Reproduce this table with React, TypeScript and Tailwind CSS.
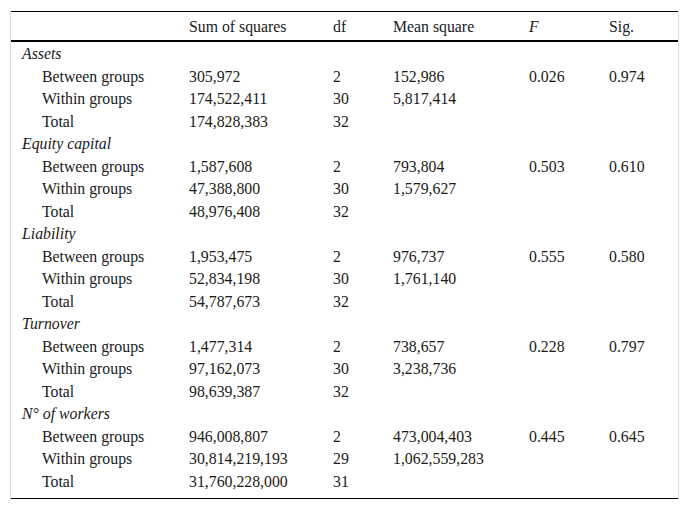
import React from "react";

type Row = { label: string; ss: string; df: string; ms: string; f?: string; sig?: string };
type Group = { name: React.ReactNode; rows: Row[] };

const groups: Group[] = [
  {
    name: "Assets",
    rows: [
      { label: "Between groups", ss: "305,972", df: "2", ms: "152,986", f: "0.026", sig: "0.974" },
      { label: "Within groups", ss: "174,522,411", df: "30", ms: "5,817,414" },
      { label: "Total", ss: "174,828,383", df: "32", ms: "" },
    ],
  },
  {
    name: "Equity capital",
    rows: [
      { label: "Between groups", ss: "1,587,608", df: "2", ms: "793,804", f: "0.503", sig: "0.610" },
      { label: "Within groups", ss: "47,388,800", df: "30", ms: "1,579,627" },
      { label: "Total", ss: "48,976,408", df: "32", ms: "" },
    ],
  },
  {
    name: "Liability",
    rows: [
      { label: "Between groups", ss: "1,953,475", df: "2", ms: "976,737", f: "0.555", sig: "0.580" },
      { label: "Within groups", ss: "52,834,198", df: "30", ms: "1,761,140" },
      { label: "Total", ss: "54,787,673", df: "32", ms: "" },
    ],
  },
  {
    name: "Turnover",
    rows: [
      { label: "Between groups", ss: "1,477,314", df: "2", ms: "738,657", f: "0.228", sig: "0.797" },
      { label: "Within groups", ss: "97,162,073", df: "30", ms: "3,238,736" },
      { label: "Total", ss: "98,639,387", df: "32", ms: "" },
    ],
  },
  {
    name: "N° of workers",
    rows: [
      { label: "Between groups", ss: "946,008,807", df: "2", ms: "473,004,403", f: "0.445", sig: "0.645" },
      { label: "Within groups", ss: "30,814,219,193", df: "29", ms: "1,062,559,283" },
      { label: "Total", ss: "31,760,228,000", df: "31", ms: "" },
    ],
  },
];

const cols = "grid grid-cols-[178px_144px_60px_136px_80px_1fr]";

export default function App() {
  return (
    <div className="bg-white w-[689px] h-[509px] pt-[11px] pl-[10px] text-[15.8px] leading-none text-[#1a1a1a] font-['Liberation_Serif','Times_New_Roman',serif]">
      <div className="w-[669px] border-x border-[#dcdcdc] pb-[1px]">
        <div className="border-t border-black">
          <div className={`${cols} h-[30px] pt-[2px] items-center border-b-2 border-black`}>
            <div />
            <div>Sum of squares</div>
            <div>df</div>
            <div>Mean square</div>
            <div className="italic">F</div>
            <div>Sig.</div>
          </div>
          <div className="pb-[6px] border-b border-black">
            {groups.map((g, gi) => (
              <React.Fragment key={gi}>
                <div className={`${cols} h-[22.5px] pt-[2px] items-center`}>
                  <div className="pl-[11px] italic whitespace-nowrap">{g.name}</div>
                </div>
                {g.rows.map((r, ri) => (
                  <div key={ri} className={`${cols} h-[22.5px] pt-[2px] items-center whitespace-nowrap`}>
                    <div className="pl-[31px]">{r.label}</div>
                    <div>{r.ss}</div>
                    <div>{r.df}</div>
                    <div>{r.ms}</div>
                    <div>{r.f ?? ""}</div>
                    <div>{r.sig ?? ""}</div>
                  </div>
                ))}
              </React.Fragment>
            ))}
          </div>
        </div>
      </div>
    </div>
  );
}
